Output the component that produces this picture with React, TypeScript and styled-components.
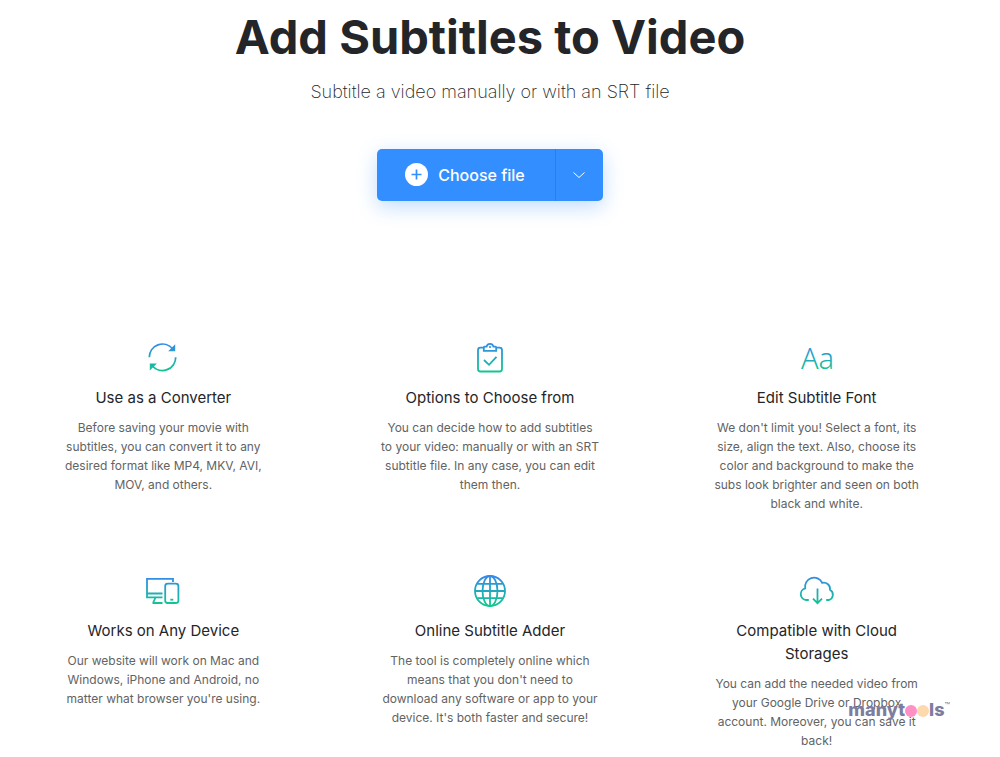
import React from "react";
import styled, { createGlobalStyle } from "styled-components";

const GlobalStyle = createGlobalStyle`
  *, *::before, *::after { box-sizing: border-box; }
  body {
    margin: 0;
    background: #fff;
    color: #242529;
    font-family: Inter, "Liberation Sans", sans-serif;
  }
`;

const Page = styled.main`
  position: relative;
  padding: 8px 20px 8px 0;
`;

const Hero = styled.header`
  display: flex;
  flex-direction: column;
  align-items: center;
  text-align: center;
`;

const Title = styled.h1`
  margin: 0;
  font-size: 47px;
  line-height: 58px;
  font-weight: 700;
`;

const Subtitle = styled.p`
  margin: 12px 0 0;
  font-size: 18px;
  line-height: 28px;
  font-weight: 200;
`;

const SplitButton = styled.div`
  display: flex;
  height: 52px;
  margin-top: 43px;
  border-radius: 5px;
  background: #338fff;
  box-shadow: 0 6px 20px rgba(51, 143, 255, 0.3);
`;

const ButtonPart = styled.button`
  display: flex;
  align-items: center;
  gap: 10px;
  border: 0;
  padding: 0 0 1px;
  background: transparent;
  color: #fff;
  font: 500 16px/24px Inter, "Liberation Sans", sans-serif;
  cursor: pointer;
`;

const ChooseButton = styled(ButtonPart)`
  padding: 0 30px 1px 28px;
`;

const MoreButton = styled(ButtonPart)`
  width: 48px;
  justify-content: center;
  border-left: 1px solid #2a80ea;
`;

const Features = styled.section`
  display: grid;
  grid-template-columns: repeat(3, 1fr);
  row-gap: 58px;
  margin-top: 137px;
`;

const Feature = styled.article`
  display: flex;
  flex-direction: column;
  align-items: center;
  text-align: center;
`;

const FeatureTitle = styled.h2`
  max-width: 219px;
  margin: 8px 0 0;
  font-size: 15px;
  line-height: 23px;
  font-weight: 400;
`;

const FeatureText = styled.p`
  max-width: 219px;
  margin: 9px 0 0;
  color: #626363;
  font-size: 12px;
  line-height: 19px;
`;

const Watermark = styled.div`
  position: absolute;
  right: 50px;
  bottom: 38px;
  display: flex;
  align-items: center;
  color: #7c7d9f;
  font: 800 18px/20px Inter, sans-serif;
`;

const Dot = styled.span<{ $color: string }>`
  width: 12px;
  height: 12px;
  margin-top: 2px;
  border-radius: 50%;
  background: ${(p) => p.$color};
`;

const Mark = styled.span`
  align-self: flex-start;
  font: 400 9px/12px Inter, sans-serif;
`;

function Icon({ id, children }: { id: string; children: React.ReactNode }) {
  return (
    <svg width="40" height="40" viewBox="0 0 40 40" fill="none" stroke={`url(#${id})`} strokeWidth="1.8" aria-hidden="true">
      <defs>
        <linearGradient id={id} gradientUnits="userSpaceOnUse" x1="0" y1="6" x2="0" y2="34">
          <stop offset="0" stopColor="#338be8" />
          <stop offset="1" stopColor="#10c78f" />
        </linearGradient>
      </defs>
      {children}
    </svg>
  );
}

const features = [
  {
    id: "convert",
    title: "Use as a Converter",
    text: "Before saving your movie with subtitles, you can convert it to any desired format like MP4, MKV, AVI, MOV, and others.",
    icon: (
      <>
        <path d="M6.300 19.300A13.200 13.200 0 0 1 29.600 10.800M32.700 19.300A13.200 13.200 0 0 1 9.400 27.800" />
        <path d="M32.200 6.200v7h-7ZM6.800 32.400v-7h7Z" fill="url(#convert)" stroke="none" />
      </>
    ),
  },
  {
    id: "options",
    title: "Options to Choose from",
    text: "You can decide how to add subtitles to your video: manually or with an SRT subtitle file. In any case, you can edit them then.",
    icon: (
      <>
        <path d="M13.500 9.700H10.500a2.500 2.500 0 0 0-2.500 2.500V31a2.500 2.500 0 0 0 2.500 2.500h19a2.500 2.500 0 0 0 2.500-2.500V12.200a2.500 2.500 0 0 0-2.500-2.500H26.500" />
        <path d="M13.800 12.900V9.400Q13.800 8.600 14.600 8.600H16.600A3.500 3.500 0 0 1 23.400 8.600H25.400Q26.200 8.600 26.200 9.400V12.900Z" />
        <circle cx="20" cy="9" r="1.100" fill="url(#options)" stroke="none" />
        <path d="M14 22l5 4.800 7.500-8" />
      </>
    ),
  },
  {
    id: "font",
    title: "Edit Subtitle Font",
    text: "We don't limit you! Select a font, its size, align the text. Also, choose its color and background to make the subs look brighter and seen on both black and white.",
    icon: (
      <text x="20.500" y="30.500" textAnchor="middle" fontFamily="Noto Sans, sans-serif" fontSize="29" fontWeight="300" fill="url(#font)" stroke="none">
        Aa
      </text>
    ),
  },
  {
    id: "device",
    title: "Works on Any Device",
    text: "Our website will work on Mac and Windows, iPhone and Android, no matter what browser you're using.",
    icon: (
      <>
        <path d="M30 11V7.800H4v18.500H19.500M4 22.500H19.500M12.500 26.500L10 32M9.500 32H19.500" />
        <rect x="22.200" y="12.600" width="13.200" height="19.400" rx="2.500" />
        <path d="M27.300 28.700h3" />
      </>
    ),
  },
  {
    id: "online",
    title: "Online Subtitle Adder",
    text: "The tool is completely online which means that you don't need to download any software or app to your device. It's both faster and secure!",
    icon: (
      <>
        <circle cx="20" cy="20" r="15" />
        <ellipse cx="20" cy="20" rx="7.500" ry="15" />
        <path d="M20 5v30M5 20h30M7.300 12.800h25.400M7.300 27.200h25.400" />
      </>
    ),
  },
  {
    id: "cloud",
    title: "Compatible with Cloud Storages",
    text: "You can add the needed video from your Google Drive or Dropbox account. Moreover, you can save it back!",
    icon: (
      <>
        <path d="M11.800 29H9.200A5.900 5.900 0 0 1 8.200 17.400A9 9 0 0 1 25.200 11.900A6.300 6.300 0 0 1 33 18.800A5.600 5.600 0 0 1 32 29H29.200" />
        <path d="M20.500 17.500V32M16 27.600l4.500 4.600 4.500-4.600" />
      </>
    ),
  },
];

export default function App() {
  return (
    <>
      <GlobalStyle />
      <Page>
        <Hero>
          <Title>Add Subtitles to Video</Title>
          <Subtitle>Subtitle a video manually or with an SRT file</Subtitle>
          <SplitButton>
            <ChooseButton type="button">
              <svg width="23" height="23" viewBox="0 0 23 23" aria-hidden="true">
                <circle cx="11.500" cy="11.500" r="11.500" fill="#fff" />
                <path d="M11.500 6.500v10M6.500 11.500h10" stroke="#338fff" strokeWidth="1.700" />
              </svg>
              Choose file
            </ChooseButton>
            <MoreButton type="button" aria-label="More sources">
              <svg width="12" height="8" viewBox="0 0 12 8" fill="none" stroke="#fff" aria-hidden="true">
                <path d="M0.500 1.500L6 6.500L11.500 1.500" />
              </svg>
            </MoreButton>
          </SplitButton>
        </Hero>
        <Features>
          {features.map((f) => (
            <Feature key={f.id}>
              <Icon id={f.id}>{f.icon}</Icon>
              <FeatureTitle>{f.title}</FeatureTitle>
              <FeatureText>{f.text}</FeatureText>
            </Feature>
          ))}
        </Features>
        <Watermark>
          manyt
          <Dot $color="#ff8fc4" />
          <Dot $color="#ffd9ae" />
          ls
          <Mark>™</Mark>
        </Watermark>
      </Page>
    </>
  );
}
